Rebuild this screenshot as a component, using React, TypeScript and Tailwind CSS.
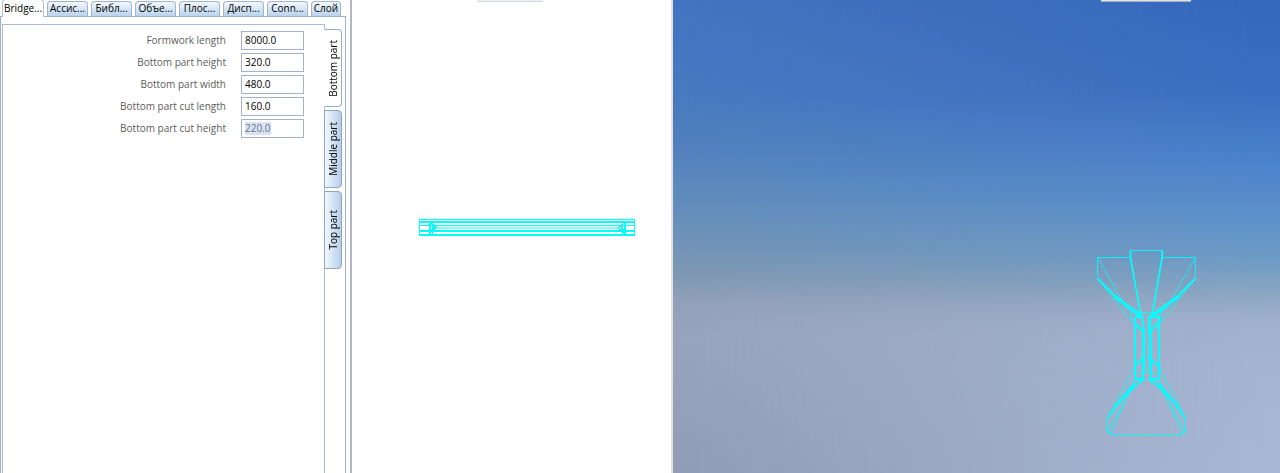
import { useState } from "react";

const paletteTabs = ["Bridge...", "Ассис...", "Библ...", "Объе...", "Плос...", "Дисп...", "Conn...", "Слой"];

const partTabs = ["Bottom part", "Middle part", "Top part"];

const fields = [
  { id: "formwork-length", label: "Formwork length", value: "8000.0" },
  { id: "bottom-height", label: "Bottom part height", value: "320.0" },
  { id: "bottom-width", label: "Bottom part width", value: "480.0" },
  { id: "cut-length", label: "Bottom part cut length", value: "160.0" },
  { id: "cut-height", label: "Bottom part cut height", value: "220.0", selected: true },
];

function PaletteTabs() {
  const [active, setActive] = useState(0);
  return (
    <div role="tablist" className="flex h-4 shrink-0 gap-[3px] pl-[2px]">
      {paletteTabs.map((name, i) => (
        <button
          key={name}
          type="button"
          role="tab"
          aria-selected={i === active}
          onClick={() => setActive(i)}
          className={
            "flex items-center justify-center rounded-t-[4px] border border-b-0 leading-3 whitespace-nowrap " +
            (i === active
              ? "relative z-10 -mt-px h-[18px] w-[42px] border-[#b4c2d6] bg-white pb-[2px]"
              : "mt-px h-[15px] w-[41px] border-[#9fb4cf] bg-linear-to-b from-[#f3f8fc] to-[#b9d3ec] pb-[2px] last:w-[30px]")
          }
        >
          {name}
        </button>
      ))}
    </div>
  );
}

function PartTabs() {
  const [active, setActive] = useState(0);
  return (
    <div role="tablist" aria-orientation="vertical" className="-ml-px flex w-[18px] flex-col gap-[3px] pt-[5px]">
      {partTabs.map((name, i) => (
        <button
          key={name}
          type="button"
          role="tab"
          aria-selected={i === active}
          onClick={() => setActive(i)}
          className={
            "flex h-[78px] w-full items-center justify-center rounded-r-[4px] border " +
            (i === active
              ? "border-[#9aacc6] border-l-white bg-white"
              : "border-[#8fa5c2] bg-linear-to-r from-[#f3f8fc] to-[#b4cfe9]")
          }
        >
          <span className="rotate-180 leading-4 whitespace-nowrap [writing-mode:vertical-rl]">{name}</span>
        </button>
      ))}
    </div>
  );
}

function Palette() {
  return (
    <aside className="flex flex-col border-r-2 border-[#b3b7c2] bg-white pr-[4px]">
      <PaletteTabs />
      <div className="flex flex-1 border-x border-t border-[#9fb0c9] pt-[7px] pl-px">
        <form className="flex-1 border border-b-0 border-[#a9bbd6] pt-1 pr-5">
          {fields.map((f) => (
            <div key={f.id} className="flex h-[22px] items-center justify-end gap-[15px]">
              <label htmlFor={f.id} className="text-[#5c5c5c]">
                {f.label}
              </label>
              <input
                id={f.id}
                defaultValue={f.value}
                className={
                  "h-[19px] w-[63px] border border-[#a3b3cc] px-[3px] " +
                  (f.selected
                    ? "bg-linear-to-r from-[#d9e2f2] to-[#d9e2f2] bg-[length:26px_13px] bg-[position:3px_2px] bg-no-repeat text-[#64748f]"
                    : "bg-white text-black")
                }
              />
            </div>
          ))}
        </form>
        <div className="pr-[3px]">
          <PartTabs />
        </div>
      </div>
    </aside>
  );
}

function PlanView() {
  return (
    <section aria-label="Plan" className="relative overflow-hidden border-r-2 border-[#dfe1e4] bg-white">
      <div className="absolute top-0 left-[125px] h-[2px] w-[66px] border-b border-[#d6d9e2] bg-[#eceef6]" />
      <svg
        className="absolute top-[218px] left-[67px]"
        width="218"
        height="20"
        viewBox="419 218 218 20"
        fill="none"
        stroke="#00ffff"
        shapeRendering="crispEdges"
      >
        <path d="M419.5 219.5H634.5V235.5H419.5Z" />
        <path d="M420 222H635M420 231H635M420 235H635" strokeWidth="2" />
        <path d="M420 225.5H635" />
        <path d="M436 228H620" strokeWidth="2" strokeOpacity=".5" />
        <path d="M429.5 221V235M624.5 221V235" strokeWidth="2" />
        <path d="M429 221L437 227L429 234M432 221V235M625 221L618 228L625 234M622 222V235" />
        <path d="M428 224L435 227L428 232M626 224L620 227L626 232" />
      </svg>
    </section>
  );
}

function PerspectiveView() {
  return (
    <section aria-label="Perspective" className="relative overflow-hidden">
      <div className="absolute inset-0 bg-[linear-gradient(to_bottom,#4274c0_0%,#487ac0_20%,#5281bd_31%,#608cbc_42%,#7294b7_52%,#8299b3_59%,#94a0b9_64%,#98a4be_71%,#919cb6_100%)]" />
      <div className="absolute inset-0 bg-[linear-gradient(to_bottom,#3368bb_0%,#3a6fc1_20%,#4a82cb_34%,#5a8fcc_44%,#6b9ac6_54%,#8aa6c3_62%,#a1b1cd_68%,#a5b5d1_78%,#a8b8d4_100%)] [mask-image:linear-gradient(to_right,transparent,black)]" />
      <div className="absolute top-0 left-[428px] h-[2px] w-[90px] border-b border-[#a9b3c4] bg-[#dfe3e8]" />
      <svg
        className="absolute top-[248px] left-[422px]"
        width="104"
        height="190"
        viewBox="1095 248 104 190"
        fill="none"
        stroke="#00ffff"
      >
        <g shapeRendering="crispEdges">
          <path d="M1130 258V250.5H1162V258" strokeOpacity=".85" />
          <path d="M1130 257.5H1097.5V279M1162 257.5H1195.5V279" strokeOpacity=".85" />
          <path d="M1131.5 308V322M1161.5 308V322M1139 312.5H1154" />
          <path d="M1134.500 316V380M1158.500 316V380" strokeWidth="2" />
          <path d="M1144.500 327V372M1148.500 316V372" />
          <path d="M1142.500 330V380M1150.500 330V380" strokeWidth="2" />
          <path d="M1134 373.500H1159" strokeOpacity=".6" />
          <path d="M1107.500 417V431L1111 434.500H1182L1185.500 431V417" />
        </g>
        <path d="M1130.5 251V258L1141 316M1162 251V258L1152 316" strokeWidth="1.7" />
        <path d="M1098 258L1126 308L1140 317M1195 258L1167 308L1153 317" strokeOpacity=".7" />
        <path d="M1098 279L1117 298L1143 317M1195 279L1176 298L1150 317" strokeWidth="2" />
        <path d="M1114 296L1140 315M1179 296L1153 315" strokeWidth="3" />
        <path d="M1098 279L1131 321L1144 333M1195 279L1162 321L1149 333" strokeOpacity=".75" />
        <path d="M1134 317H1142L1144 333M1159 317H1150V333" strokeWidth="2" />
        <path d="M1144 333L1134 322M1149 333L1159 322M1144 357L1134 367M1149 357L1159 367" strokeWidth="2" />
        <path d="M1134 379H1143L1140 383M1159 379H1150L1153 383" strokeWidth="2.5" />
        <path d="M1134 367L1108 417M1159 367L1185 417M1137 380L1108 431M1156 380L1185 431M1134 380L1111 434M1159 380L1182 434" strokeOpacity=".8" />
        <path d="M1142 380L1120 401L1108 418M1151 380L1173 401L1185 418" strokeWidth="1.7" />
        <path d="M1134 384L1115 407M1159 384L1178 407" strokeWidth="2.4" />
      </svg>
    </section>
  );
}

export default function App() {
  return (
    <main className="grid min-h-screen grid-cols-[352px_321fr_607fr] bg-white font-['Open_Sans','Noto_Sans',sans-serif] text-[10px] text-black">
      <Palette />
      <PlanView />
      <PerspectiveView />
    </main>
  );
}
